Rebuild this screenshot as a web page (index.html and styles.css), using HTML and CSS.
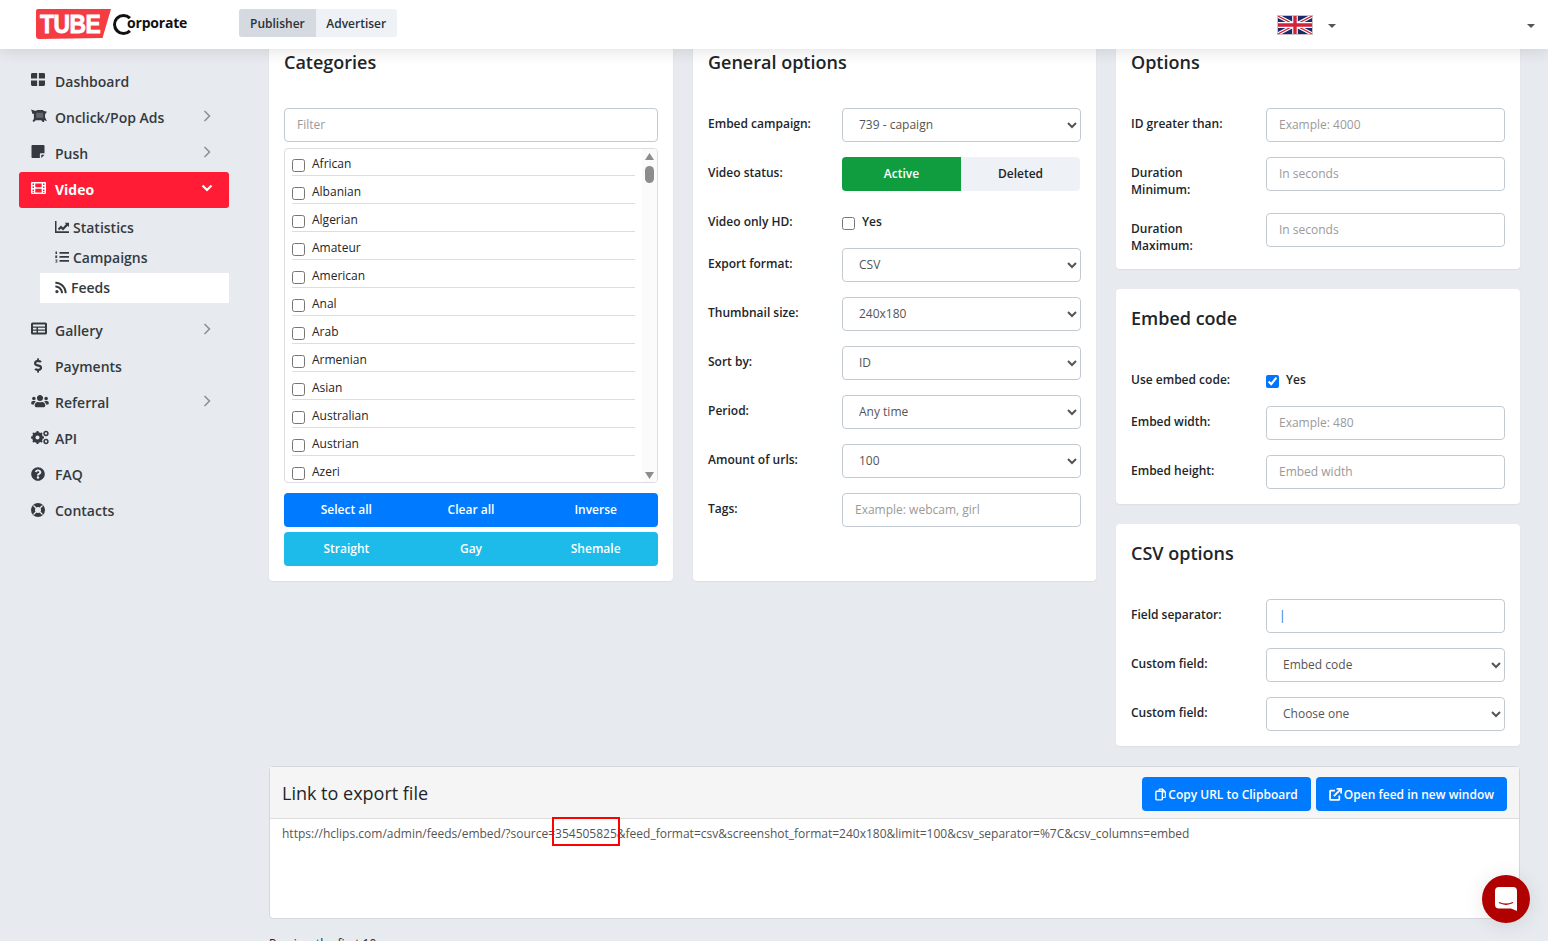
FILE: index.html
```html
<!DOCTYPE html>
<html lang="en">
<head>
<meta charset="utf-8">
<title>Feeds</title>
<link rel="stylesheet" href="styles.css">
</head>
<body>
<header class="topbar">
  <a class="logo">
    <svg class="logo-mark" viewBox="0 0 75 30" width="75" height="30"><path d="M2 0H75L66.500 29L3 30Q0 30 0 27V2Q0 0 2 0Z" fill="#f43c42"/></svg>
    <span class="logo-tube">TUBE</span>
    <span class="logo-ring"></span>
    <span class="logo-corp">orporate</span>
  </a>
  <div class="switch">
    <span class="switch-item is-on">Publisher</span>
    <span class="switch-item">Advertiser</span>
  </div>
  <div class="top-right">
    <svg class="flag" viewBox="0 0 60 30" width="34" height="18" preserveAspectRatio="none">
      <rect width="60" height="30" fill="#1b2a6b"/>
      <path d="M0 0L60 30M60 0L0 30" stroke="#fff" stroke-width="6"/>
      <path d="M0 0L60 30M60 0L0 30" stroke="#d3223a" stroke-width="2"/>
      <path d="M30 0V30M0 15H60" stroke="#fff" stroke-width="10"/>
      <path d="M30 0V30M0 15H60" stroke="#d3223a" stroke-width="6"/>
    </svg>
    <span class="caret caret-flag"></span>
    <span class="caret"></span>
  </div>
</header>

<div class="layout">
  <nav class="sidebar">
    <a class="nav-item"><svg class="ico" viewBox="0 0 16 14" preserveAspectRatio="none"><path d="M0 1.500Q0 0 1.500 0H7V6H0ZM9 0H14.500Q16 0 16 1.500V6H9ZM0 8H7V14H1.500Q0 14 0 12.500ZM9 8H16V12.500Q16 14 14.500 14H9Z"/></svg><span>Dashboard</span></a>
    <a class="nav-item"><svg class="ico ico-w" viewBox="0 0 17 14"><path d="M0 0.500L4 2H6V1H13V2L17 3L15 6V9L17 13L14 12V14H12.500L11 12H5L3 14L1.500 13L3 10.500V5L1.500 5.500Z"/><path d="M5.500 4H13V9.500H5.500Z" fill="#e7eaef" opacity=".25"/></svg><span>Onclick/Pop Ads</span><svg class="chev" viewBox="0 0 8 12"><path d="M1.500 1L6.500 6L1.500 11" fill="none" stroke="#8a8f96" stroke-width="1.500"/></svg></a>
    <a class="nav-item"><svg class="ico" viewBox="0 0 14 14"><path d="M1 0H13Q14 0 14 1V9H10Q9 9 9 10V14H1Q0 14 0 13V1Q0 0 1 0ZM14 10.500L10.500 14V10.500Z"/></svg><span>Push</span><svg class="chev" viewBox="0 0 8 12"><path d="M1.500 1L6.500 6L1.500 11" fill="none" stroke="#8a8f96" stroke-width="1.500"/></svg></a>
    <a class="nav-item is-active"><svg class="ico" viewBox="0 0 15 12"><path fill-rule="evenodd" d="M1 0H14Q15 0 15 1V11Q15 12 14 12H1Q0 12 0 11V1Q0 0 1 0ZM1.500 1.500V3H3V1.500ZM1.500 4.500V6H3V4.500ZM1.500 7.500V9H3V7.500ZM1.500 9.800V10.800H3V9.800ZM12 1.500V3H13.500V1.500ZM12 4.500V6H13.500V4.500ZM12 7.500V9H13.500V7.500ZM12 9.800V10.800H13.500V9.800ZM4.300 1.500V5.300H10.700V1.500ZM4.300 6.700V10.500H10.700V6.700Z"/></svg><span>Video</span><svg class="chev chev-down" viewBox="0 0 12 8"><path d="M1.500 1.500L6 6L10.500 1.500" fill="none" stroke="#fff" stroke-width="2.200"/></svg></a>
    <div class="subnav">
      <a class="sub-item"><svg class="sub-ico" viewBox="0 0 14 12"><path d="M0 0H1.500V10.300H14V12H0ZM3 7.500L6 4.500L8 6.500L11 3L9.700 1.700H14V6L12.700 4.700L8 9.500L6 7.500L4 9.500Z"/></svg><span>Statistics</span></a>
      <a class="sub-item"><svg class="sub-ico" viewBox="0 0 14 12"><path d="M4.500 1H14V2.800H4.500ZM4.500 5H14V6.800H4.500ZM4.500 9H14V10.800H4.500ZM0.500 0.500H2V3H0.500ZM0.300 4.500H2.300V5.300L1.300 6.300H2.300V7H0.300ZM0.300 8.500H2.300V11.500H0.300V10.800H1.600V10.300H0.800V9.800H1.600V9.200H0.300Z"/></svg><span>Campaigns</span></a>
      <a class="sub-item is-current"><svg class="sub-ico sub-ico-rss" viewBox="0 0 448 512"><path d="M128.081 415.959c0 35.369-28.672 64.041-64.041 64.041S0 451.328 0 415.959s28.672-64.041 64.041-64.041 64.04 28.673 64.04 64.041zm175.66 47.25c-8.354-154.6-132.185-278.587-286.95-286.95C7.656 175.765 0 183.105 0 192.253v48.069c0 8.415 6.49 15.472 14.887 16.018 111.832 7.284 201.473 96.702 208.772 208.772.547 8.397 7.604 14.887 16.018 14.887h48.069c9.149.001 16.489-7.655 15.995-16.79zm144.249.288C439.596 229.677 251.465 40.445 16.503 32.01 7.473 31.686 0 38.981 0 48.016v48.068c0 8.625 6.835 15.645 15.453 15.999 191.179 7.839 344.627 161.316 352.465 352.465.353 8.618 7.373 15.453 15.999 15.453h48.068c9.034-.001 16.329-7.474 16.005-16.504z"/></svg><span>Feeds</span></a>
    </div>
    <a class="nav-item"><svg class="ico ico-w" viewBox="0 0 16 12"><path fill-rule="evenodd" d="M1.500 0H14.500Q16 0 16 1.500V10.500Q16 12 14.500 12H1.500Q0 12 0 10.500V1.500Q0 0 1.500 0ZM2 2V4H14V2ZM2 5.200V7H5.500V5.200ZM7 5.200V7H14V5.200ZM2 8.200V10H5.500V8.200ZM7 8.200V10H14V8.200Z"/></svg><span>Gallery</span><svg class="chev" viewBox="0 0 8 12"><path d="M1.500 1L6.500 6L1.500 11" fill="none" stroke="#8a8f96" stroke-width="1.500"/></svg></a>
    <a class="nav-item"><svg class="ico ico-dollar" viewBox="0 0 320 512"><path d="M209.2 233.4l-108-31.6C88.7 198.2 80 186.5 80 173.5c0-16.3 13.2-29.5 29.5-29.5h66.3c12.2 0 24.2 3.700 34.2 10.500 6.100 4.100 14.300 3.100 19.500-2l34.800-34c7.100-6.900 6.100-18.400-1.800-24.500C238 74.800 207.400 64.100 176 64V16c0-8.800-7.200-16-16-16h-32c-8.800 0-16 7.200-16 16v48h-2.500C45.800 64-5.400 118.700.5 183.600c4.200 46.100 39.400 83.600 83.800 96.600l102.500 30c12.500 3.700 21.200 15.300 21.200 28.300 0 16.300-13.200 29.500-29.500 29.500h-66.300C100 368 88 364.300 78 357.500c-6.100-4.100-14.300-3.100-19.500 2l-34.800 34c-7.100 6.900-6.100 18.400 1.800 24.500 24.500 19.200 55.100 29.900 86.500 30v48c0 8.800 7.200 16 16 16h32c8.800 0 16-7.200 16-16v-48.200c46.600-.9 90.300-28.600 105.700-72.700 21.500-61.600-14.600-124.800-72.500-141.700z"/></svg><span>Payments</span></a>
    <a class="nav-item"><svg class="ico ico-wide" viewBox="0 0 640 512"><path d="M96 224c35.300 0 64-28.700 64-64s-28.700-64-64-64-64 28.700-64 64 28.700 64 64 64zm448 0c35.300 0 64-28.700 64-64s-28.700-64-64-64-64 28.700-64 64 28.700 64 64 64zm32 32h-64c-17.600 0-33.500 7.100-45.100 18.600 40.300 22.100 68.900 62 75.100 109.400h66c17.700 0 32-14.300 32-32v-32c0-35.300-28.700-64-64-64zm-256 0c61.900 0 112-50.100 112-112S381.900 32 320 32 208 82.100 208 144s50.100 112 112 112zm76.800 32h-8.300c-20.800 10-43.900 16-68.500 16s-47.600-6-68.500-16h-8.300C179.600 288 128 339.600 128 403.200V432c0 26.500 21.500 48 48 48h288c26.500 0 48-21.500 48-48v-28.800c0-63.600-51.600-115.200-115.200-115.200zm-223.700-13.400C161.500 263.100 145.600 256 128 256H64c-35.300 0-64 28.700-64 64v32c0 17.700 14.300 32 32 32h65.900c6.300-47.400 34.900-87.300 75.200-109.400z"/></svg><span>Referral</span><svg class="chev" viewBox="0 0 8 12"><path d="M1.500 1L6.500 6L1.500 11" fill="none" stroke="#8a8f96" stroke-width="1.500"/></svg></a>
    <a class="nav-item"><svg class="ico ico-gears" viewBox="0 0 18 14"><circle cx="6.500" cy="7" r="3.800" fill="none" stroke="#343a40" stroke-width="3.200"/><path d="M6.500 0.500V13.500M0 7H13M2 2.500L11 11.500M11 2.500L2 11.500" stroke="#343a40" stroke-width="2"/><circle cx="6.500" cy="7" r="2" fill="#e7eaef"/><circle cx="15" cy="3" r="1.900" fill="none" stroke="#343a40" stroke-width="1.500"/><circle cx="15" cy="11" r="1.900" fill="none" stroke="#343a40" stroke-width="1.500"/></svg><span>API</span></a>
    <a class="nav-item"><svg class="ico ico-round" viewBox="0 0 512 512"><path d="M504 256c0 136.997-111.043 248-248 248S8 392.997 8 256C8 119.083 119.043 8 256 8s248 111.083 248 248zM262.655 90c-54.497 0-89.255 22.957-116.549 63.758-3.536 5.286-2.353 12.415 2.715 16.258l34.699 26.310c5.205 3.947 12.621 3.008 16.665-2.122 17.864-22.658 30.113-35.797 57.303-35.797 20.429 0 45.698 13.148 45.698 32.958 0 14.976-12.363 22.667-32.534 33.976C247.128 238.528 216 254.941 216 296v4c0 6.627 5.373 12 12 12h56c6.627 0 12-5.373 12-12v-1.333c0-28.462 83.186-29.647 83.186-106.667 0-58.002-60.165-102-116.531-102zM256 338c-25.365 0-46 20.635-46 46 0 25.364 20.635 46 46 46s46-20.636 46-46c0-25.365-20.635-46-46-46z"/></svg><span>FAQ</span></a>
    <a class="nav-item"><svg class="ico ico-round" viewBox="0 0 14 14"><circle cx="7" cy="7" r="5" fill="none" stroke="#343a40" stroke-width="4"/><path d="M2.500 2.500L5 5M11.500 2.500L9 5M2.500 11.500L5 9M11.500 11.500L9 9" stroke="#e7eaef" stroke-width="1.300"/></svg><span>Contacts</span></a>
  </nav>

  <main class="main">
    <div class="cards">
      <section class="card">
        <h2 class="card-title">Categories</h2>
        <input class="field field-filter" placeholder="Filter">
        <div class="checklist">
          <label class="check-row"><input type="checkbox"><span>African</span></label>
          <label class="check-row"><input type="checkbox"><span>Albanian</span></label>
          <label class="check-row"><input type="checkbox"><span>Algerian</span></label>
          <label class="check-row"><input type="checkbox"><span>Amateur</span></label>
          <label class="check-row"><input type="checkbox"><span>American</span></label>
          <label class="check-row"><input type="checkbox"><span>Anal</span></label>
          <label class="check-row"><input type="checkbox"><span>Arab</span></label>
          <label class="check-row"><input type="checkbox"><span>Armenian</span></label>
          <label class="check-row"><input type="checkbox"><span>Asian</span></label>
          <label class="check-row"><input type="checkbox"><span>Australian</span></label>
          <label class="check-row"><input type="checkbox"><span>Austrian</span></label>
          <label class="check-row"><input type="checkbox"><span>Azeri</span></label>
          <div class="fake-scroll">
            <svg class="sb-arrow sb-up" viewBox="0 0 10 6" preserveAspectRatio="none"><path d="M5 0L10 6H0Z"/></svg>
            <span class="sb-thumb"></span>
            <svg class="sb-arrow sb-down" viewBox="0 0 10 6" preserveAspectRatio="none"><path d="M0 0H10L5 6Z"/></svg>
          </div>
        </div>
        <div class="btn-group btn-blue"><span>Select all</span><span>Clear all</span><span>Inverse</span></div>
        <div class="btn-group btn-cyan"><span>Straight</span><span>Gay</span><span>Shemale</span></div>
      </section>

      <section class="card">
        <h2 class="card-title">General options</h2>
        <div class="form-row"><label class="form-label">Embed campaign:</label><select class="field"><option>739 - capaign</option></select></div>
        <div class="form-row"><label class="form-label">Video status:</label><div class="segment"><span class="seg seg-on">Active</span><span class="seg">Deleted</span></div></div>
        <div class="form-row form-row-check"><label class="form-label">Video only HD:</label><label class="yes"><input type="checkbox"><span>Yes</span></label></div>
        <div class="form-row"><label class="form-label">Export format:</label><select class="field"><option>CSV</option></select></div>
        <div class="form-row"><label class="form-label">Thumbnail size:</label><select class="field"><option>240x180</option></select></div>
        <div class="form-row"><label class="form-label">Sort by:</label><select class="field"><option>ID</option></select></div>
        <div class="form-row"><label class="form-label">Period:</label><select class="field"><option>Any time</option></select></div>
        <div class="form-row"><label class="form-label">Amount of urls:</label><select class="field"><option>100</option></select></div>
        <div class="form-row"><label class="form-label">Tags:</label><input class="field" placeholder="Example: webcam, girl"></div>
      </section>

      <div class="side-col">
        <section class="card">
          <h2 class="card-title">Options</h2>
          <div class="form-row"><label class="form-label">ID greater than:</label><input class="field" placeholder="Example: 4000"></div>
          <div class="form-row"><label class="form-label">Duration Minimum:</label><input class="field" placeholder="In seconds"></div>
          <div class="form-row"><label class="form-label">Duration Maximum:</label><input class="field" placeholder="In seconds"></div>
        </section>
        <section class="card">
          <h2 class="card-title">Embed code</h2>
          <div class="form-row form-row-check"><label class="form-label">Use embed code:</label><label class="yes"><input type="checkbox" checked><span>Yes</span></label></div>
          <div class="form-row"><label class="form-label">Embed width:</label><input class="field" placeholder="Example: 480"></div>
          <div class="form-row"><label class="form-label">Embed height:</label><input class="field" placeholder="Embed width"></div>
        </section>
        <section class="card">
          <h2 class="card-title">CSV options</h2>
          <div class="form-row"><label class="form-label">Field separator:</label><input class="field field-accent" value="|"></div>
          <div class="form-row"><label class="form-label">Custom field:</label><select class="field"><option>Embed code</option></select></div>
          <div class="form-row"><label class="form-label">Custom field:</label><select class="field"><option>Choose one</option></select></div>
        </section>
      </div>
    </div>

    <section class="export">
      <div class="export-head">
        <h3 class="export-title">Link to export file</h3>
        <div class="export-actions">
          <a class="btn-primary"><svg class="btn-ico btn-ico-copy" viewBox="0 0 12 13"><path d="M4.500 2.500V1.200Q4.500 .7 5 .7H8.300L11.300 3.700V9.300Q11.300 9.800 10.800 9.800H8M8.300 .7V3.700H11.300" fill="none" stroke="#fff" stroke-width="1.300"/><rect x="1" y="3" width="7" height="9.300" rx=".8" fill="none" stroke="#fff" stroke-width="1.500"/></svg>Copy URL to Clipboard</a>
          <a class="btn-primary"><svg class="btn-ico btn-ico-open" viewBox="0 0 12 12"><path d="M9.500 7V10.500Q9.500 11 9 11H1.500Q1 11 1 10.500V3Q1 2.500 1.500 2.500H5.500" fill="none" stroke="#fff" stroke-width="1.600"/><path d="M4.500 7.500L10 2M7 .7H11.300V5" fill="none" stroke="#fff" stroke-width="1.800"/></svg>Open feed in new window</a>
        </div>
      </div>
      <div class="export-body">https://hclips.com/admin/feeds/embed/?source=354505825&amp;feed_format=csv&amp;screenshot_format=240x180&amp;limit=100&amp;csv_separator=%7C&amp;csv_columns=embed</div>
      <span class="highlight"></span>
    </section>
    <p class="preview">Preview the first 10</p>
  </main>
</div>

<a class="chat">
  <svg viewBox="0 0 22 24" width="22" height="24"><path d="M4 0H18Q22 0 22 4V24L16 21.500H4Q0 21.500 0 17.500V4Q0 0 4 0Z" fill="#fff"/><path d="M4 15.500Q11 19 18 15.500" fill="none" stroke="#b00000" stroke-width="1.300"/></svg>
</a>
</body>
</html>
```
FILE: styles.css
```css
* { box-sizing: border-box; }
html, body { height: 100%; margin: 0; overflow: hidden; }
body {
  background: #e7eaef;
  color: #212529;
  font-family: "Open Sans", "Noto Sans", sans-serif;
  font-size: 12px;
}
a { color: inherit; text-decoration: none; }

.topbar {
  position: relative;
  z-index: 5;
  display: flex;
  align-items: center;
  height: 49px;
  background: #fff;
  box-shadow: 0 2px 16px rgba(0, 0, 0, .12);
}
.logo { position: relative; display: block; width: 239px; height: 49px; flex: none; }
.logo-mark { position: absolute; left: 36px; top: 9px; }
.logo-tube {
  position: absolute; left: 40px; top: 7px;
  color: #fff; font: 700 26px/34px "Liberation Sans", sans-serif;
  -webkit-text-stroke: .8px #fff; letter-spacing: -.6px;
  transform: scaleX(.88); transform-origin: left center;
}
.logo-ring {
  position: absolute; left: 113px; top: 14px; width: 21px; height: 21px;
  border: 3px solid #111; border-right-color: transparent; border-radius: 50%;
}
.logo-corp {
  position: absolute; left: 127px; top: 10px;
  color: #111; font-size: 14px; line-height: 26px; font-weight: 700; letter-spacing: -.2px; white-space: nowrap;
}

.switch { display: flex; height: 28px; margin-top: -3px; border-radius: 3px; overflow: hidden; background: #eef1f6; }
.switch-item { display: flex; align-items: center; padding: 0 10.500px; font-weight: 600; color: #2b3136; }
.switch-item.is-on { background: #d5d9e0; padding: 0 11px; }

.top-right { margin-left: auto; display: flex; align-items: center; height: 49px; }
.flag { display: block; width: 36px; height: 20px; border: 1px solid #c4c4c4; margin-right: 15px; }
.caret { width: 0; height: 0; border: 4px solid transparent; border-top-color: #555; border-bottom: 0; margin-right: 13px; margin-top: 2px; }
.caret-flag { margin-right: 191px; }

.layout { display: flex; height: calc(100% - 49px); }
.sidebar { flex: none; width: 249px; padding: 15px 20px 0 19px; }
.nav-item {
  display: flex; align-items: center;
  height: 36px; padding-left: 12px; padding-bottom: 1px;
  color: #343a40; font-size: 14px; font-weight: 600; border-radius: 3px;
  position: relative;
}
.nav-item > span { margin-left: 24px; }
.ico { position: absolute; left: 12px; top: 9px; width: 14px; height: 13px; fill: #343a40; }
.ico-w { width: 16px; height: 13px; }
.ico-dollar { left: 15px; width: 9px; height: 15px; }
.ico-wide { width: 18px; height: 14px; }
.ico-gears { width: 18px; height: 15px; }
.ico-round { width: 14px; height: 14px; top: 10px; }
.chev { position: absolute; right: 18px; top: 10px; width: 8px; height: 12px; }
.chev-down { width: 12px; height: 8px; right: 16px; top: 12px; }
.nav-item.is-active { background: #ff1c34; color: #fff; font-weight: 700; }
.nav-item.is-active .ico { fill: #fff; width: 15px; height: 12px; top: 10px; }

.subnav { padding: 5px 0 10px 21px; }
.sub-item { display: flex; align-items: center; height: 30px; padding: 0 0 2px 15px; color: #343a40; font-size: 14px; font-weight: 600; }
.sub-ico { width: 14px; height: 12px; fill: #343a40; margin-right: 4px; flex: none; }
.sub-ico-rss { width: 12px; height: 13px; margin-right: 4px; }
.sub-item.is-current { background: #fff; }

.main { flex: 1; min-width: 0; padding: 0 28px 0 20px; margin-top: -16px; }
.cards {
  display: grid;
  grid-template-columns: 404px 403px 404px;
  grid-template-rows: auto 1fr;
  column-gap: 20px;
}
.card { background: #fff; border-radius: 4px; padding: 0 15px; box-shadow: 0 1px 2px rgba(0, 0, 0, .05); }
.side-col { grid-column: 3; grid-row: 1 / span 2; display: flex; flex-direction: column; gap: 20px; }
.side-col .form-label { width: 135px; }
.card-title { margin: 0 0 31px; padding-top: 14px; font-size: 18px; line-height: 30px; font-weight: 600; color: #212529; }

.field {
  display: block; width: 100%; height: 34px; padding: 0 12px 2px;
  border: 1px solid #c3cad1; border-radius: 4px; background: #fff;
  color: #555; font-family: inherit; font-size: 12px; outline: 0;
}
.field::placeholder { color: #9a9a9a; opacity: 1; }
.field-accent { color: #1a6fd0; }

.checklist { position: relative; height: 335px; margin-top: 6px; padding: 0 22px 0 7px; border: 1px solid #ddd; border-radius: 4px; overflow: hidden; }
.check-row { display: flex; height: 28px; align-items: center; border-bottom: 1px solid #ddd; padding-bottom: 1px; }
.check-row:first-child { margin-top: -1px; }
.check-row:last-of-type { border-bottom-color: transparent; }
.check-row input { width: 13px; height: 13px; margin: 9px 7px 0 0; flex: none; }
.check-row span { color: #212529; margin-top: 5px; }
.fake-scroll { position: absolute; right: 0; top: 0; bottom: 0; width: 15px; background: #fbfbfb; }
.sb-arrow { position: absolute; left: 3px; width: 9px; height: 7px; fill: #8c8c8c; }
.sb-up { top: 4px; }
.sb-down { bottom: 3px; }
.sb-thumb { position: absolute; left: 3px; top: 17px; width: 9px; height: 17px; border-radius: 5px; background: #8c8c8c; }

.btn-group { display: flex; height: 34px; margin-top: 5px; border-radius: 4px; color: #fff; font-weight: 600; }
.btn-group span { flex: 1; display: flex; align-items: center; justify-content: center; padding-bottom: 1px; }
.btn-blue { margin-top: 10px; background: #007bff; }
.btn-cyan { background: #1cbbea; margin-bottom: 15px; }

.form-row { display: flex; margin-bottom: 15px; }
.form-row-check { height: 27px; }
.form-label { flex: none; width: 134px; padding: 7px 28px 0 0; font-size: 12px; line-height: 17px; font-weight: 600; color: #212529; }
.segment { display: flex; width: 238px; height: 34px; background: #eef1f6; border-radius: 4px; overflow: hidden; font-weight: 600; }
.seg { flex: 1; display: flex; align-items: center; justify-content: center; padding-bottom: 2px; }
.seg-on { background: #0f9d3f; color: #fff; font-weight: 600; }
.yes { display: flex; align-items: flex-start; padding-top: 7px; font-weight: 600; line-height: 17px; }
.yes input { width: 13px; height: 13px; margin: 4px 7px 0 0; }

.export { position: relative; margin-top: 20px; background: #fff; border: 1px solid #d4d7db; border-radius: 4px; height: 153px; }
.export-head { display: flex; justify-content: space-between; align-items: center; height: 52px; padding: 3px 12px 0; background: #f5f5f5; border-bottom: 1px solid #ddd; }
.export-title { margin: 0 0 3px; font-size: 18px; font-weight: 400; color: #212529; }
.export-actions { display: flex; gap: 5px; }
.btn-primary { display: flex; align-items: center; height: 34px; padding: 0 13px; background: #007bff; color: #fff; border-radius: 4px; font-weight: 600; }
.btn-ico { height: 13px; margin-right: 2px; }
.btn-ico-copy { width: 11px; }
.btn-ico-open { width: 13px; }
.export-body { padding: 6px 12px; line-height: 17px; color: #555; white-space: nowrap; }
.highlight { position: absolute; left: 282px; top: 50px; width: 68px; height: 29px; border: 2px solid #f00; }
.preview { margin: 16px 0 0; }

.chat { position: fixed; right: 18px; bottom: 18px; width: 48px; height: 48px; border-radius: 50%; background: #b00000; display: flex; align-items: center; justify-content: center; box-shadow: 0 2px 20px rgba(0, 0, 0, .1); }
.chat svg { display: block; }
```
